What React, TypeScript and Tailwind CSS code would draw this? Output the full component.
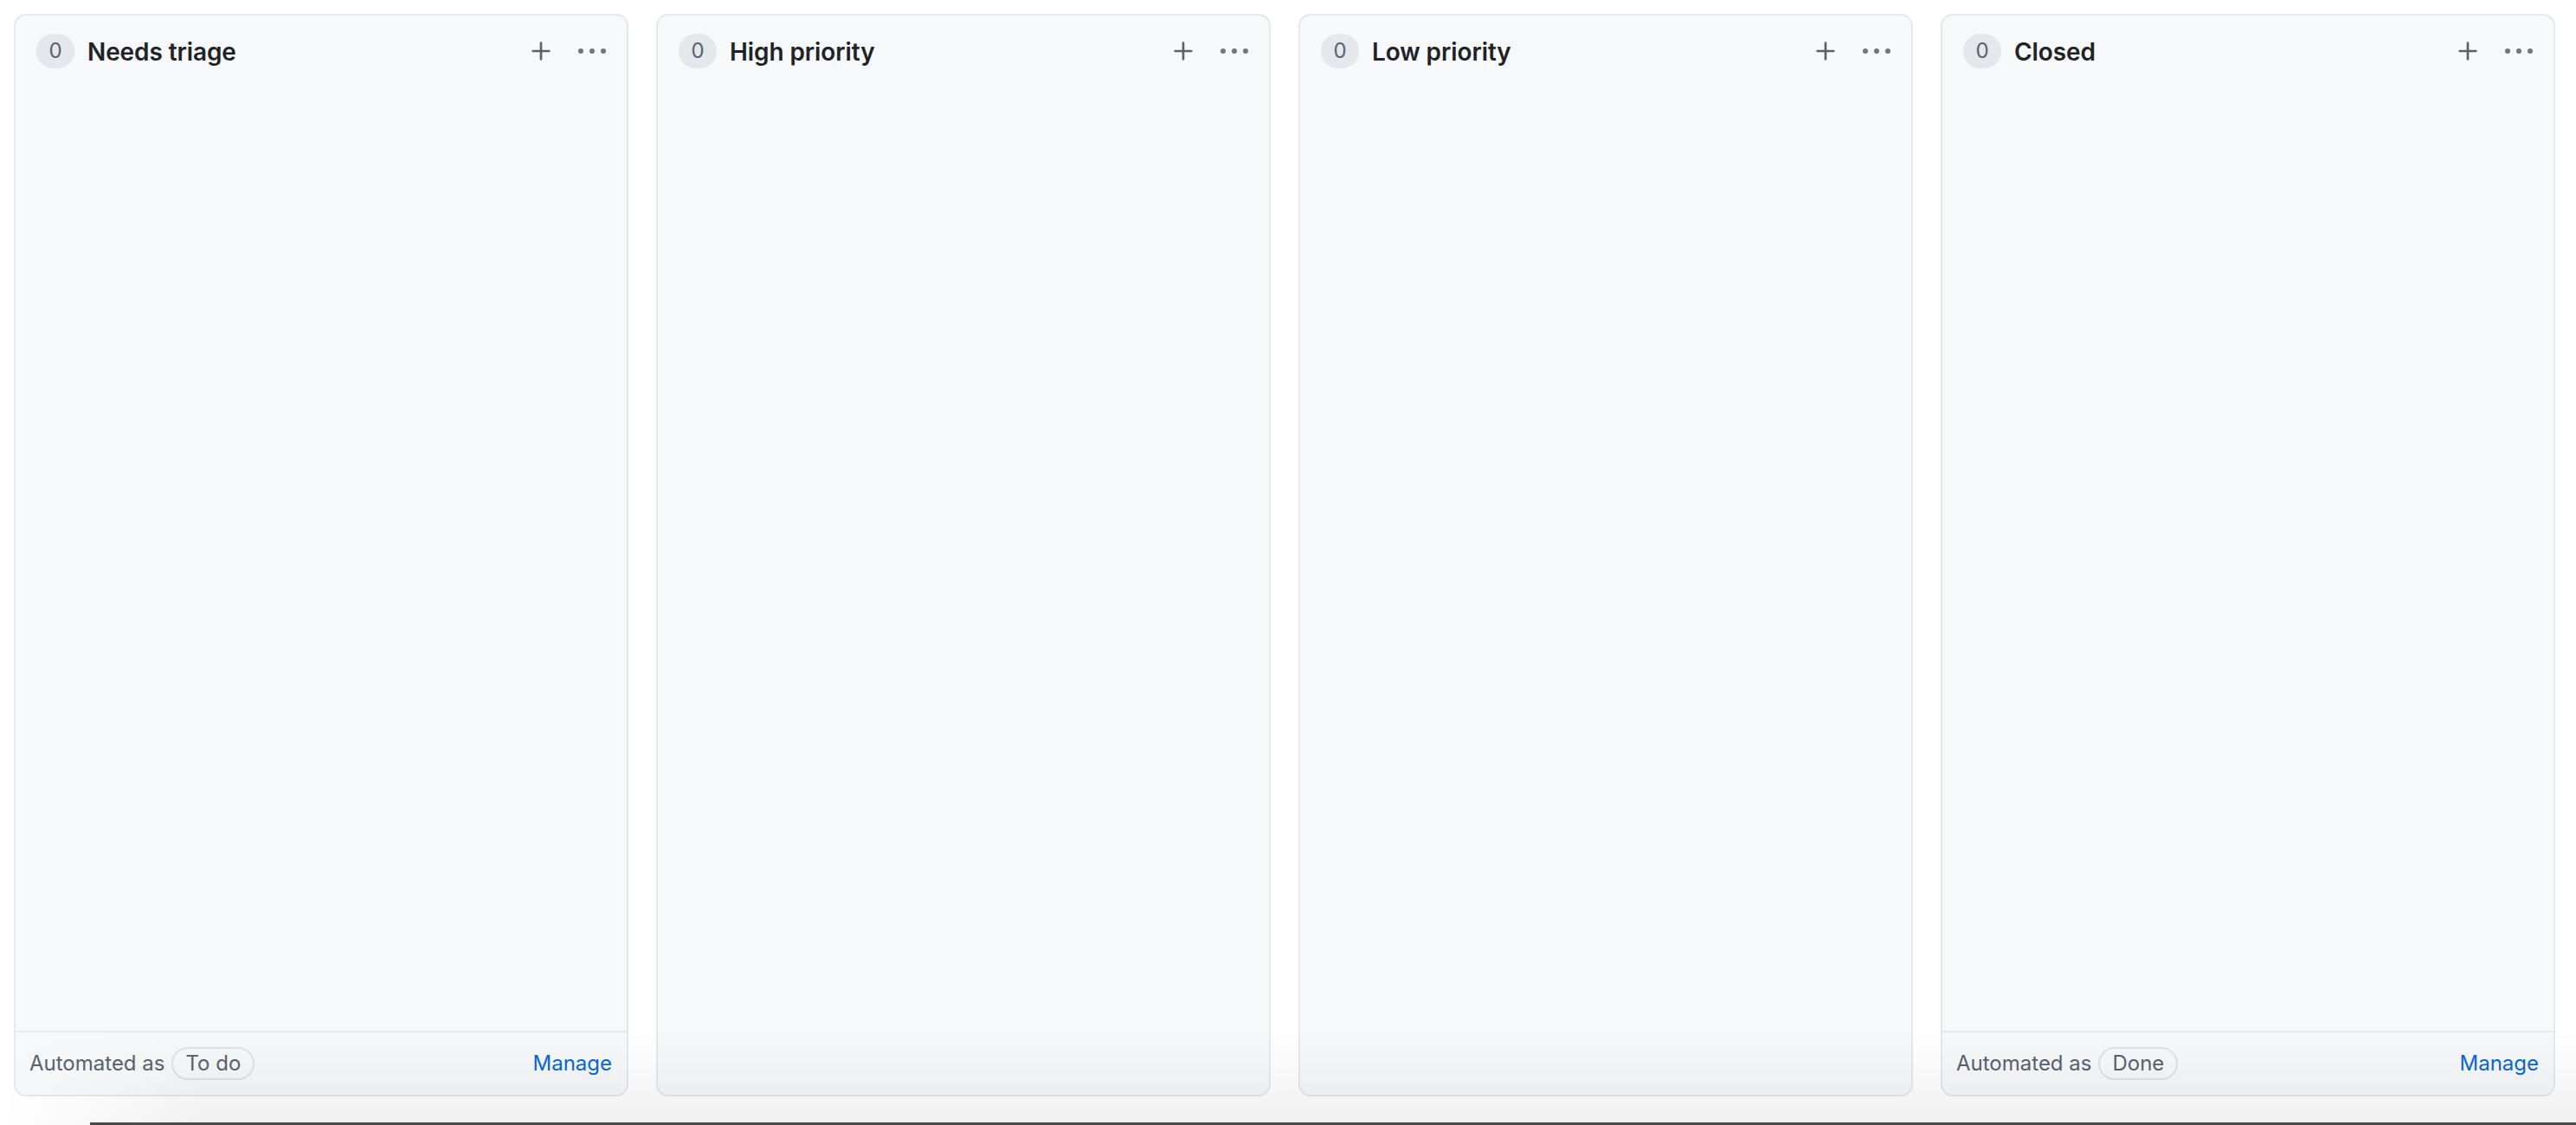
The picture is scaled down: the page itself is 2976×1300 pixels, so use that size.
import { Plus } from 'lucide-react'

interface Column {
  name: string
  count: number
  // automation status shown in the footer, if any
  automatedAs?: string
}

const columns: Column[] = [
  { name: 'Needs triage', count: 0, automatedAs: 'To do' },
  { name: 'High priority', count: 0 },
  { name: 'Low priority', count: 0 },
  { name: 'Closed', count: 0, automatedAs: 'Done' },
]

function Dots() {
  return (
    <svg width="34" height="8" viewBox="0 0 34 8" fill="#6e7781">
      <circle cx="4" cy="4" r="3" />
      <circle cx="17" cy="4" r="3" />
      <circle cx="30" cy="4" r="3" />
    </svg>
  )
}

function BoardColumn({ column }: { column: Column }) {
  return (
    <div className="w-[710px] h-[1251px] shrink-0 flex flex-col bg-[#f6f8fa] border-2 border-[#e6e9ec] rounded-[14px] overflow-hidden">
      {/* Header */}
      <div className="h-[82px] shrink-0 flex items-center pl-[24px] pr-[18px]">
        <span className="w-[44px] h-[40px] rounded-full bg-[#e4e7eb] flex items-center justify-center text-[24px] text-[#59636e]">
          {column.count}
        </span>
        <h3 className="ml-[15px] mt-[2px] text-[28px] font-semibold text-[#1f2328] tracking-[-0.1px]">
          {column.name}
        </h3>
        <div className="ml-auto flex items-center gap-[15px]">
          <button className="w-[44px] h-[44px] flex items-center justify-center text-[#59636e]">
            <Plus className="w-[32px] h-[32px]" strokeWidth={2} />
          </button>
          <button className="w-[44px] h-[44px] flex items-center justify-center">
            <Dots />
          </button>
        </div>
      </div>

      {/* Items */}
      <div className="flex-1" />

      {/* Footer */}
      {column.automatedAs && (
        <div className="h-[74px] shrink-0 border-t-2 border-[#e6e9ec] flex items-center pl-[16px] pr-[17px] text-[24px]">
          <span className="text-[#59636e]">Automated as</span>
          <span className="ml-[8px] h-[38px] px-[14px] rounded-full border-2 border-[#dfe2e6] flex items-center text-[#59636e]">
            {column.automatedAs}
          </span>
          <a href="#" className="ml-auto text-[#0969da]">
            Manage
          </a>
        </div>
      )}
    </div>
  )
}

export default function App() {
  return (
    <div className="relative w-full h-[1300px] bg-white overflow-hidden font-['Inter','Noto_Sans',sans-serif]">
      <div className="flex gap-[32px] pl-[16px] pt-[16px]">
        {columns.map((c) => (
          <BoardColumn key={c.name} column={c} />
        ))}
      </div>

      {/* bottom window shadow */}
      <div className="absolute left-0 right-0 bottom-0 h-[110px] pointer-events-none bg-gradient-to-b from-transparent to-black/[0.06] [mask-image:linear-gradient(to_right,transparent,black_240px)]" />
      <div className="absolute left-[104px] right-0 bottom-0 h-[3px] bg-[#4b4b4b]" />
    </div>
  )
}
